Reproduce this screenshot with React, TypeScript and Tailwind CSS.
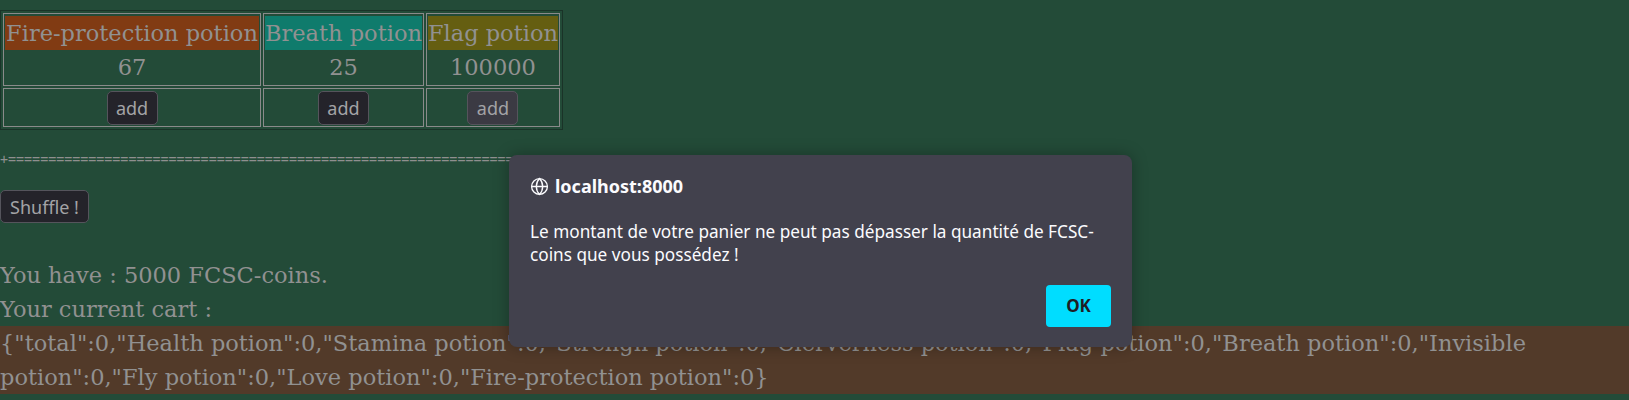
import { Globe } from "lucide-react";

const potions = [
  { name: "Fire-protection potion", price: "67", bg: "bg-[#813b13]", w: "w-[258px]", btn: "bg-[#24232a]" },
  { name: "Breath potion", price: "25", bg: "bg-[#0f7b6c]", w: "w-[158px]", btn: "bg-[#24232a]" },
  { name: "Flag potion", price: "100000", bg: "bg-[#655e11]", w: "w-[133px]", btn: "bg-[#3b3a43]" },
];

const serif = "font-['DejaVu_Serif',serif] text-[22.5px] leading-[34px] text-[#919191]";
const sans = "font-['Noto_Sans',sans-serif]";

export default function App() {
  return (
    <main className="relative min-h-[400px] bg-[#234b38] overflow-hidden">
      <div className="pt-[10px]">
        <table className="border-separate border-spacing-[2px] border border-[#1a3328]">
          <tbody>
            <tr>
              {potions.map((p) => (
                <td key={p.name} className={`${p.w} border border-[#8a8a8a] pt-[2px] pb-[1px] px-[1px] text-center align-top`}>
                  <div className={`${p.bg} ${serif} whitespace-nowrap overflow-hidden`}>{p.name}</div>
                  <div className={serif}>{p.price}</div>
                </td>
              ))}
            </tr>
            <tr>
              {potions.map((p) => (
                <td key={p.name} className="border border-[#8a8a8a] pt-[2px] pb-[1px] text-center">
                  <button className={`${p.btn} ${sans} h-[34px] w-[51px] rounded-[5px] border border-[#55545c] text-[18px] text-[#a3a3a6] leading-none`}>
                    add
                  </button>
                </td>
              ))}
            </tr>
          </tbody>
        </table>
      </div>

      <div className="mt-[22px] h-[16px] font-['DejaVu_Sans_Mono',monospace] text-[13.33px] leading-[16px] text-[#8f8f8f] whitespace-nowrap">
        +{"=".repeat(75)}
      </div>

      <button className={`${sans} mt-[22px] h-[33px] px-[9px] rounded-[5px] border border-[#55545c] bg-[#24232a] text-[18px] text-[#a3a3a6] leading-none`}>
        Shuffle !
      </button>

      <div className={`mt-[35px] ${serif}`}>
        <div>You have : 5000 FCSC-coins.</div>
        <div>Your current cart :</div>
        <div className="bg-[#523a29]">
          {'{"total":0,"Health potion":0,"Stamina potion":0,"Strengh potion":0,"Clerverness potion":0,"Flag potion":0,"Breath potion":0,"Invisible'}
          <br />
          {'potion":0,"Fly potion":0,"Love potion":0,"Fire-protection potion":0}'}
        </div>
      </div>

      {/* alert dialog sitting over the page */}
      <div className={`${sans} absolute left-[509px] top-[155px] w-[623px] rounded-[8px] bg-[#42414d] px-[21px] pt-[22px] pb-[20px] text-[#fbfbfe] shadow-[0_0_16px_rgba(0,0,0,0.3)]`}>
        <div className="flex h-[18px] items-center gap-[6px] text-[18px] font-bold">
          <Globe size={19} strokeWidth={1.7} />
          <span>localhost:8000</span>
        </div>
        <p className="mt-[25px] text-[17.2px] leading-[23px]">
          Le montant de votre panier ne peut pas dépasser la quantité de FCSC-
          <br />
          coins que vous possédez !
        </p>
        <div className="mt-[19px] flex justify-end">
          <button className="h-[42px] w-[65px] rounded-[4px] bg-[#00ddff] text-[17px] font-bold text-[#1f1e25]">OK</button>
        </div>
      </div>
    </main>
  );
}
